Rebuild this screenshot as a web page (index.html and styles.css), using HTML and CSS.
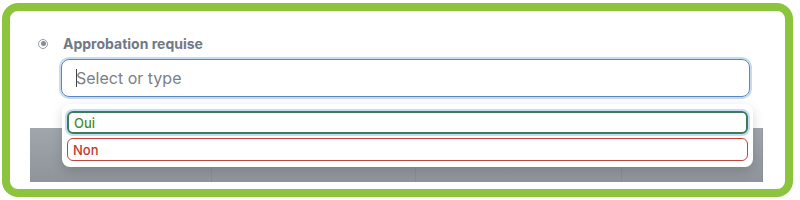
FILE: index.html
```html
<!DOCTYPE html>
<html lang="fr">
<head>
    <meta charset="UTF-8">
    <title>Approbation requise</title>
    <link rel="stylesheet" href="styles.css">
</head>
<body>
    <div class="frame">
        <div class="field">
            <div class="field-label">
                <span class="radio"></span>
                <span class="label-text">Approbation requise</span>
            </div>
            <div class="select-input">
                <span class="caret"></span>
                <span class="placeholder">Select or type</span>
            </div>
        </div>

        <div class="table-strip">
            <div class="cell"></div>
            <div class="cell"></div>
            <div class="cell"></div>
            <div class="cell"></div>
        </div>

        <div class="dropdown">
            <div class="option option-yes">Oui</div>
            <div class="option option-no">Non</div>
        </div>
    </div>
</body>
</html>
```

FILE: styles.css
```css
html, body {
    margin: 0;
    padding: 0;
    background: #fff;
}
body {
    font-family: Inter, "Noto Sans", sans-serif;
    width: 800px;
    height: 200px;
    overflow: hidden;
}
.frame {
    position: relative;
    box-sizing: border-box;
    margin: 3px 7px 0 2px;
    height: 194px;
    border: 8px solid #8cc43e;
    border-radius: 16px;
    background: #fff;
    padding: 24px 22px 0 20px;
}
.field-label {
    display: flex;
    align-items: center;
    height: 17px;
    padding-left: 8px;
}
.radio {
    box-sizing: border-box;
    width: 10px;
    height: 10px;
    border: 1.5px solid #9a9fa6;
    border-radius: 50%;
    display: flex;
    align-items: center;
    justify-content: center;
    margin-right: 15px;
}
.radio::after {
    content: "";
    width: 5px;
    height: 5px;
    border-radius: 50%;
    background: #868c93;
}
.label-text {
    font-size: 14px;
    font-weight: 700;
    color: #717985;
}
.select-input {
    box-sizing: border-box;
    margin: 7px 13px 0 31px;
    height: 38px;
    border: 1px solid #5b86bb;
    border-radius: 8px;
    box-shadow: 0 0 0 2px #c6dbf0;
    display: flex;
    align-items: center;
    padding-left: 14px;
}
.caret {
    width: 1px;
    height: 18px;
    background: #444;
}
.placeholder {
    font-size: 16px;
    color: #7d7f83;
    margin-left: -1px;
}
.table-strip {
    margin-top: 31px;
    height: 54px;
    display: grid;
    grid-template-columns: 182px 204px 206px 1fr;
    background: linear-gradient(#a1a6ad, #8f949b);
}
.cell {
    border-right: 1px solid rgba(0, 0, 0, 0.05);
}
.dropdown {
    position: absolute;
    top: 93px;
    left: 52px;
    width: 691px;
    box-sizing: border-box;
    padding: 7px 5px 6px 5px;
    background: #fff;
    border-radius: 8px;
    box-shadow: 0 4px 12px rgba(0, 0, 0, 0.16);
    display: flex;
    flex-direction: column;
    gap: 4px;
}
.option {
    box-sizing: border-box;
    height: 23px;
    border-radius: 6px;
    font-size: 13px;
    font-weight: 500;
    display: flex;
    align-items: center;
    padding-left: 5px;
}
.option-yes {
    border: 2px solid #3e7a5c;
    color: #3f8a2e;
    box-shadow: 0 0 0 2px #c6dcf2;
}
.option-no {
    border: 1.5px solid #c0433d;
    color: #c0392f;
}
```
